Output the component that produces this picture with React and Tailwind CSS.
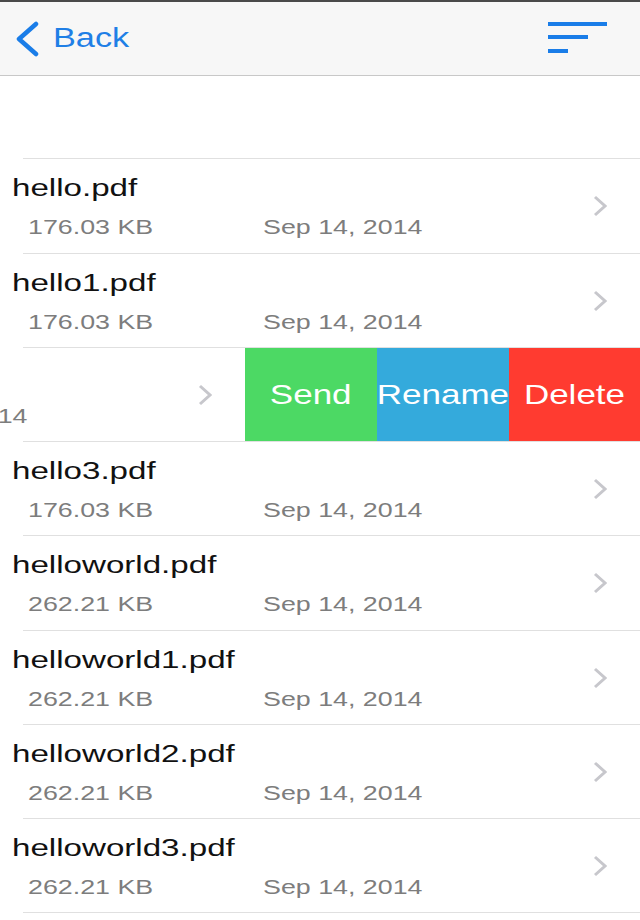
const files = [
  { name: 'hello.pdf', size: '176.03 KB', date: 'Sep 14, 2014', h: 'h-[94px]' },
  { name: 'hello1.pdf', size: '176.03 KB', date: 'Sep 14, 2014', h: 'h-[93px]' },
  { name: 'hello2.pdf', size: '176.03 KB', date: 'Sep 14, 2014', h: 'h-[93px]', swiped: true },
  { name: 'hello3.pdf', size: '176.03 KB', date: 'Sep 14, 2014', h: 'h-[93px]' },
  { name: 'helloworld.pdf', size: '262.21 KB', date: 'Sep 14, 2014', h: 'h-[94px]' },
  { name: 'helloworld1.pdf', size: '262.21 KB', date: 'Sep 14, 2014', h: 'h-[93px]' },
  { name: 'helloworld2.pdf', size: '262.21 KB', date: 'Sep 14, 2014', h: 'h-[93px]' },
  { name: 'helloworld3.pdf', size: '262.21 KB', date: 'Sep 14, 2014', h: 'h-[93px]' },
]

const actions = [
  { label: 'Send', bg: 'bg-[#4cd964]', w: 'w-[132px]' },
  { label: 'Rename', bg: 'bg-[#34aadc]', w: 'w-[132px]' },
  { label: 'Delete', bg: 'bg-[#ff3b30]', w: 'w-[131px]' },
]

function Chevron() {
  return (
    <svg width="14" height="22" viewBox="0 0 14 22" className="shrink-0 mr-[33px]">
      <polyline points="2,2 12,11 2,20" fill="none" stroke="#c7c7cc" strokeWidth="3" strokeLinejoin="miter" />
    </svg>
  )
}

function RowContent({ file }) {
  return (
    <div className="w-[640px] shrink-0 h-full flex items-center">
      <div className="flex-1 h-full pt-[15px]">
        <div className="pl-[12px] h-[28px] leading-[28px] text-[23px] text-[#111]">
          <span className="inline-block origin-left scale-x-[1.44]">{file.name}</span>
        </div>
        <div className="mt-[13px] pl-[28px] flex h-[24px] leading-[24px] text-[20px] text-[#7d7d7d]">
          <div className="w-[235px]">
            <span className="inline-block origin-left scale-x-[1.34]">{file.size}</span>
          </div>
          <span className="inline-block origin-left scale-x-[1.34]">{file.date}</span>
        </div>
      </div>
      <Chevron />
    </div>
  )
}

function FileRow({ file }) {
  return (
    <>
      <div className={`${file.h} flex overflow-hidden`}>
        {file.swiped ? (
          <>
            <div className="-ml-[395px] flex h-full">
              <RowContent file={file} />
            </div>
            {actions.map((a) => (
              <div key={a.label} className={`${a.w} ${a.bg} h-full shrink-0 flex items-center justify-center text-white text-[28px]`}>
                <span className="inline-block scale-x-[1.25] whitespace-nowrap">{a.label}</span>
              </div>
            ))}
          </>
        ) : (
          <RowContent file={file} />
        )}
      </div>
      <div className="ml-[23px] h-px bg-[#e0e0e0]" />
    </>
  )
}

export default function App() {
  return (
    <div className="w-[640px] h-[920px] bg-white overflow-hidden font-['Liberation_Sans',Arial,sans-serif]">
      <div className="h-[2px] bg-[#4a4a4a]" />
      <header className="h-[74px] bg-[#f7f7f7] border-b border-[#c8c8c8] flex items-center justify-between">
        <div className="flex items-center pl-[14px] text-[#1f7fe6]">
          <svg width="26" height="36" viewBox="0 0 26 36" className="mt-[1px]">
            <polyline points="22,3 5,18 22,33" fill="none" stroke="#1a7de8" strokeWidth="4.5" strokeLinecap="round" strokeLinejoin="round" />
          </svg>
          <span className="ml-[13px] text-[27px] leading-none">
            <span className="inline-block origin-left scale-x-[1.27]">Back</span>
          </span>
        </div>
        <svg width="60" height="32" viewBox="0 0 60 32" className="mr-[32px] mb-[2px]">
          <rect x="0" y="0" width="59" height="4" fill="#1a7de8" />
          <rect x="0" y="13" width="40" height="4" fill="#1a7de8" />
          <rect x="0" y="27" width="20" height="4" fill="#1a7de8" />
        </svg>
      </header>
      <div className="h-[82px]" />
      <div className="ml-[23px] h-px bg-[#e0e0e0]" />
      {files.map((f) => (
        <FileRow key={f.name} file={f} />
      ))}
    </div>
  )
}
